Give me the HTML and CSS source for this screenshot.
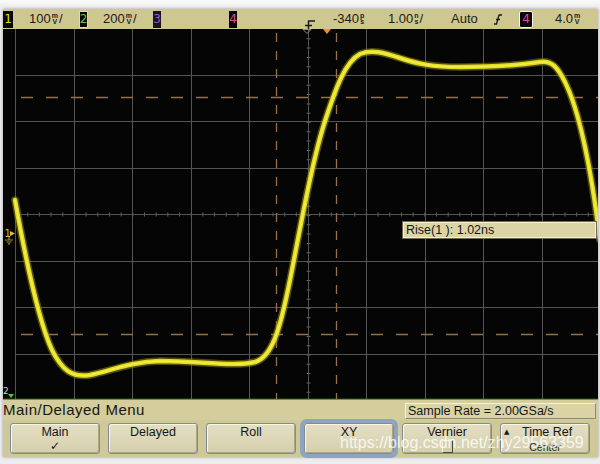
FILE: index.html
```html
<!DOCTYPE html>
<html>
<head>
<meta charset="utf-8">
<link rel="stylesheet" href="styles.css">
</head>
<body>
<div class="frame">
  <div class="status">
    <span class="ch ch1">1</span>
    <span class="sv v1">100<span class="u"><i>m</i><i>V</i></span>/</span>
    <span class="ch ch2">2</span>
    <span class="sv v2">200<span class="u"><i>m</i><i>V</i></span>/</span>
    <span class="ch ch3">3</span>
    <span class="ch ch4">4</span>
    <svg class="trig" width="12" height="14" viewBox="0 0 12 14"><path d="M4 4H11M4.5 4V13M1 8.5H8" stroke="#1a1a1a" stroke-width="1.5" fill="none"/></svg>
    <span class="sv v3">-340<span class="u"><i>p</i><i>s</i></span></span>
    <span class="sv v4">1.00<span class="u"><i>n</i><i>s</i></span>/</span>
    <span class="sv v5">Auto</span>
    <svg class="slope" width="8" height="14" viewBox="0 0 8 14"><path d="M0 12H2.5L5 3H8M2 7.5H6" stroke="#1a1a1a" stroke-width="1.3" fill="none"/></svg>
    <span class="ch ch4b">4</span>
    <span class="sv v6">4.0<span class="u"><i>m</i><i>V</i></span></span>
  </div>
  <div class="screen">
    <svg class="scope" width="595" height="371" viewBox="3 29 595 371">
      <rect x="3" y="29" width="595" height="371" fill="#050505"/>
      <path d="M15.5 29V399M74.5 29V399M132.5 29V399M191.5 29V399M249.5 29V399M308.5 29V399M366.5 29V399M425.5 29V399M483.5 29V399M542.5 29V399M15 75.5H598M15 121.5H598M15 168.5H598M15 214.5H598M15 261.5H598M15 307.5H598M15 354.5H598" stroke="#545454" stroke-width="1" fill="none"/>
      <line x1="15.5" y1="214.5" x2="598" y2="214.5" stroke="#5e5e5e" stroke-width="4" stroke-dasharray="1 10.68"/>
      <line x1="308.5" y1="29" x2="308.5" y2="399" stroke="#5e5e5e" stroke-width="4" stroke-dasharray="1 8.3"/>
      <g stroke="#94704c" stroke-width="1.3" fill="none">
        <line x1="21" y1="97.5" x2="598" y2="97.5" stroke-dasharray="12 13"/>
        <line x1="21" y1="334.5" x2="598" y2="334.5" stroke-dasharray="12 13"/>
        <line x1="276.5" y1="33" x2="276.5" y2="399" stroke-dasharray="9 9"/>
        <line x1="336.5" y1="33" x2="336.5" y2="399" stroke-dasharray="9 9"/>
      </g>
      <g fill="none" stroke-linejoin="round" stroke-linecap="round">
        <path class="glow" d="M15,200 C24,250 38,320 52,350 C62,370 72,378 90,375 C110,371 130,362 160,361 C200,361 235,367 255,362 C272,357 280,330 290,280 C300,230 312,160 326,118 C336,88 345,62 360,54 C372,49 385,53 400,58 C415,63 430,67 460,67 C500,67 520,65 540,62 C552,60 558,68 565,82 C578,108 590,160 600,240"/>
        <path class="trace" d="M15,200 C24,250 38,320 52,350 C62,370 72,378 90,375 C110,371 130,362 160,361 C200,361 235,367 255,362 C272,357 280,330 290,280 C300,230 312,160 326,118 C336,88 345,62 360,54 C372,49 385,53 400,58 C415,63 430,67 460,67 C500,67 520,65 540,62 C552,60 558,68 565,82 C578,108 590,160 600,240"/>
        <path class="core" d="M15,200 C24,250 38,320 52,350 C62,370 72,378 90,375 C110,371 130,362 160,361 C200,361 235,367 255,362 C272,357 280,330 290,280 C300,230 312,160 326,118 C336,88 345,62 360,54 C372,49 385,53 400,58 C415,63 430,67 460,67 C500,67 520,65 540,62 C552,60 558,68 565,82 C578,108 590,160 600,240"/>
      </g>
      <path d="M303 29.5H311L307 33.5Z" fill="none" stroke="#8a8a8a" stroke-width="1"/>
      <path d="M323 29H331L327 34Z" fill="#e8952c"/>
      <text x="4.5" y="237" class="m1">1</text>
      <path d="M10 231L15 233.5L10 236Z" fill="#d8c830"/>
      <path d="M9 237V240M5 240H13M6.5 242H11.5M8 243.8H10" stroke="#a09030" stroke-width="1.2" fill="none"/>
      <text x="3" y="394" class="m2">2</text>
      <path d="M8 394H14L11 398Z" fill="#5cc040"/>
      <line x1="3" y1="399.5" x2="598" y2="399.5" stroke="#5e9e3c" stroke-width="1.5"/>
    </svg>
    <div class="rise">Rise(1 ): 1.02ns</div>
  </div>
  <div class="menu-title">
    <span class="title">Main/Delayed Menu</span>
    <span class="srate">Sample Rate = 2.00GSa/s</span>
  </div>
  <div class="buttons">
    <div class="btn"><span>Main</span><span class="check">✓</span></div>
    <div class="btn"><span>Delayed</span></div>
    <div class="btn"><span>Roll</span></div>
    <div class="btn sel"><span>XY</span></div>
    <div class="btn"><span>Vernier</span><span class="knob"></span></div>
    <div class="btn tref"><span class="line"><span class="tri">▲</span><span>Time Ref</span></span><span class="sub">Center</span></div>
  </div>
  <div class="watermark">https://blog.csdn.net/zhy29563359</div>
</div>
</body>
</html>
```

FILE: styles.css
```css
* { box-sizing: border-box; }
html, body { margin: 0; padding: 0; }
body {
  width: 600px;
  height: 464px;
  overflow: hidden;
  background: linear-gradient(#fbfbfb 0, #eeeeee 7px, #ededed 100%);
  font-family: "Liberation Sans", Arial, sans-serif;
}
.frame {
  position: relative;
  margin: 9px 2px 0 3px;
  width: 595px;
  box-shadow: 0 0 3px rgba(0, 0, 0, 0.35);
}
.status {
  display: flex;
  align-items: center;
  height: 20px;
  background: #cec78f;
  color: #1c1c1c;
  font-size: 13px;
  line-height: 14px;
}
.ch {
  flex: none;
  height: 17px;
  display: flex;
  align-items: center;
  justify-content: center;
  background: #070707;
  font-size: 12px;
  font-family: "DejaVu Sans", sans-serif;
}
.ch1 { width: 10px; color: #e6dc2a; }
.ch2 { width: 9px; margin-left: 0; color: #5fc04a; border: 1px solid #d8d8c8; }
.ch3 { width: 8px; color: #8e5cc0; background: #1c1228; }
.ch4 { width: 8px; margin-left: 68px; color: #e04a9a; }
.ch4b { width: 14px; margin-left: 17px; color: #e04a9a; border: 1.5px solid #f4f4f4; border-radius: 2px; }
.sv { flex: none; white-space: nowrap; display: flex; align-items: center; }
.v1 { margin-left: 16px; width: 50px; }
.v2 { margin-left: 15px; width: 50px; }
.v3 { margin-left: 17px; width: 40px; }
.v4 { margin-left: 15px; width: 45px; }
.v5 { margin-left: 18px; width: 30px; }
.v6 { margin-left: 22px; }
.u {
  display: inline-flex;
  flex-direction: column;
  align-items: center;
  font-size: 7px;
  line-height: 6px;
  margin: 0 1px 0 1px;
  font-weight: bold;
}
.u i { font-style: normal; }
.trig { flex: none; margin-left: 67px; align-self: flex-end; margin-bottom: -2px; overflow: visible; }
.slope { flex: none; margin-left: 13px; }
.screen {
  position: relative;
  height: 371px;
  background: #050505;
}
.scope { display: block; }
.glow { stroke: #8a8410; stroke-width: 7.5; opacity: 0.55; }
.trace { stroke: #e2dc1c; stroke-width: 4.5; }
.core { stroke: #f2ee50; stroke-width: 1.6; }
.m1 { font: 10px "DejaVu Sans", sans-serif; fill: #d2c232; }
.m2 { font: 9px "DejaVu Sans", sans-serif; fill: #cfcfcf; }
.rise {
  position: absolute;
  left: 400px;
  top: 193px;
  width: 193px;
  height: 16px;
  background: #dbd5a6;
  border: 1px solid #f4f0d6;
  outline: 1px solid #6e6a50;
  color: #161616;
  font-size: 12.5px;
  line-height: 14px;
  padding-left: 2px;
}
.menu-title {
  display: flex;
  justify-content: space-between;
  align-items: flex-start;
  height: 20px;
  background: #d4cd9c;
  color: #161616;
}
.title {
  font-size: 15px;
  line-height: 20px;
  letter-spacing: 0.5px;
}
.srate {
  margin-top: 3px;
  margin-right: 2px;
  width: 191px;
  height: 16px;
  background: #d9d3a6;
  border: 1px solid;
  border-color: #f6f2dc #8e896a #8e896a #f6f2dc;
  font-size: 12.5px;
  line-height: 14px;
  padding-left: 2px;
  white-space: nowrap;
}
.buttons {
  display: flex;
  gap: 8px;
  padding: 3px 0 0 7px;
  height: 37px;
  background: #cfc899;
}
.btn {
  flex: none;
  width: 90px;
  height: 31px;
  border-radius: 3px;
  border: 1px solid #7f8b98;
  background: linear-gradient(#e4dfc3, #d5cfac);
  box-shadow: inset 1px 1px 0 #f8f5e4, inset -1px -1px 0 #aca688;
  display: flex;
  flex-direction: column;
  align-items: center;
  padding-top: 2px;
  font-size: 12.5px;
  line-height: 13px;
  color: #161616;
}
.btn.sel {
  box-shadow: 0 0 0 4px #8ea4bf, inset 1px 1px 0 #f8f5e4, inset -1px -1px 0 #aca688;
}
.check {
  font-family: "DejaVu Sans", sans-serif;
  font-size: 12px;
  line-height: 13px;
  margin-top: 1px;
}
.knob {
  width: 11px;
  height: 14px;
  margin-top: 1px;
  background: #d3cda9;
  border: 1px solid;
  border-color: #f4f0de #4a4a44 #4a4a44 #f4f0de;
}
.tref { align-items: stretch; }
.line { display: flex; align-items: center; padding-left: 3px; }
.tri { font-size: 7px; line-height: 13px; width: 18px; font-family: "DejaVu Sans", sans-serif; }
.sub { align-self: center; font-size: 10.5px; line-height: 12px; margin-top: 2px; color: #2a2a2a; }
.watermark {
  position: absolute;
  left: 337px;
  top: 426px;
  font-size: 16px;
  line-height: 16px;
  color: rgba(255, 255, 255, 0.8);
  white-space: nowrap;
  pointer-events: none;
}
```
